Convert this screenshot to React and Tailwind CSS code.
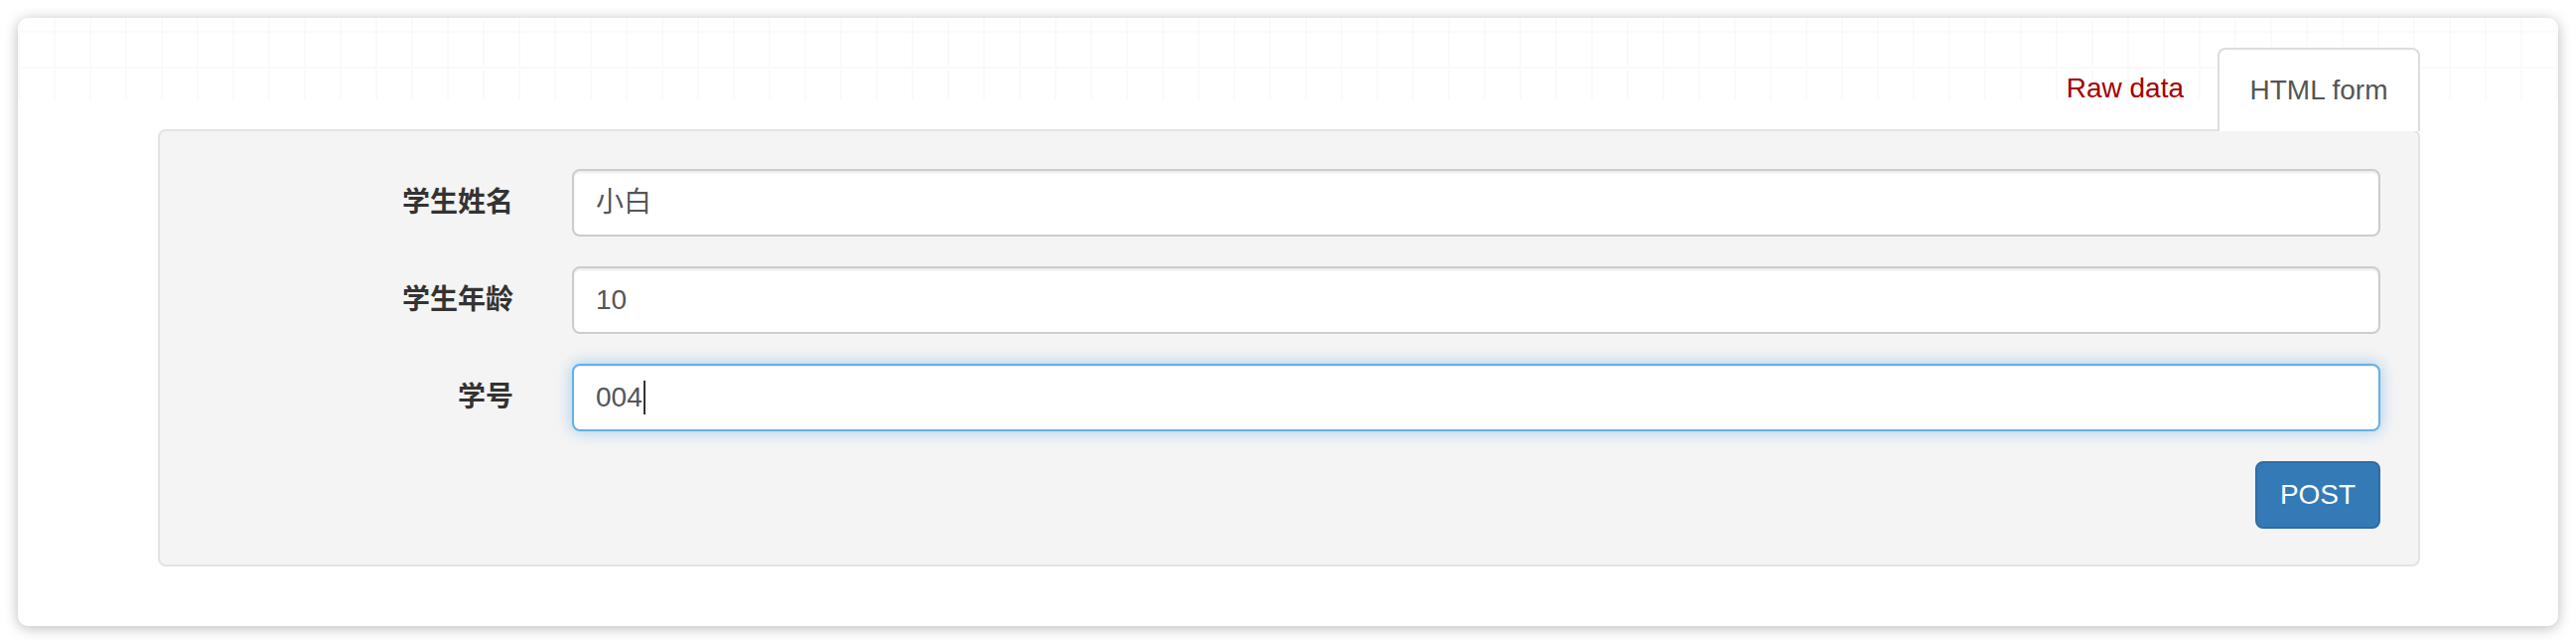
import React from "react";

const fields = [
  { label: "学生姓名", value: "小白" },
  { label: "学生年龄", value: "10" },
  { label: "学号", value: "004", focused: true },
];

const App = () => {
  return (
    <div className="min-h-[648px] bg-white pt-[18px] pl-[18px] pr-[18px] font-['Liberation_Sans','Noto_Sans_CJK_SC',sans-serif]">
      <div className="relative w-[2558px] h-[612px] rounded-[10px] bg-white shadow-[0_2px_14px_rgba(0,0,0,0.28)] pt-[30px] pl-[141px] pr-[139px]">
        {/* faint grid at the top of the card */}
        <div className="pointer-events-none absolute inset-x-0 top-0 h-[82px] rounded-t-[10px] bg-[linear-gradient(to_right,#fafafa_2px,transparent_2px),linear-gradient(to_bottom,#fafafa_2px,transparent_2px)] bg-[size:36px_36px] bg-[position:0_13px]" />

        <div className="relative">
          {/* Tabs */}
          <div className="flex justify-end">
            <div className="mr-[4px] px-[30px] h-[82px] flex items-center text-[28px] text-[#a30000]">
              Raw data
            </div>
            <div className="relative z-10 -mb-[2px] w-[204px] h-[84px] flex items-center justify-center rounded-t-[8px] border-2 border-b-0 border-[#dddddd] bg-white text-[28px] text-[#555555]">
              HTML form
            </div>
          </div>

          {/* Form panel */}
          <div className="h-[440px] rounded-[8px] border-2 border-[#e3e3e3] bg-[#f4f4f4] pt-[38px] pl-[40px] pr-[38px]">
            {fields.map((f) => (
              <div key={f.label} className="flex items-center mb-[30px]">
                <div className="w-[316px] text-right text-[28px] font-bold text-[#333333]">
                  {f.label}
                </div>
                <div className="ml-[59px] flex-1">
                  <div
                    className={
                      f.focused
                        ? "h-[68px] flex items-center rounded-[8px] border-2 border-[#66afe9] bg-white px-[22px] text-[28px] text-[#555555] shadow-[inset_0_1px_1px_rgba(0,0,0,0.075),0_0_16px_rgba(102,175,233,0.6)]"
                        : "h-[68px] flex items-center rounded-[8px] border-2 border-[#cccccc] bg-white px-[22px] text-[28px] text-[#555555] shadow-[inset_0_2px_2px_rgba(0,0,0,0.075)]"
                    }
                  >
                    <span>{f.value}</span>
                    {f.focused && (
                      <span className="ml-[1px] w-[2px] h-[34px] bg-[#333333]" />
                    )}
                  </div>
                </div>
              </div>
            ))}

            <div className="flex justify-end">
              <button className="h-[68px] w-[126px] rounded-[8px] border-2 border-[#2e6da4] bg-[#337ab7] text-[28px] text-white">
                POST
              </button>
            </div>
          </div>
        </div>
      </div>
    </div>
  );
};

export default App;
